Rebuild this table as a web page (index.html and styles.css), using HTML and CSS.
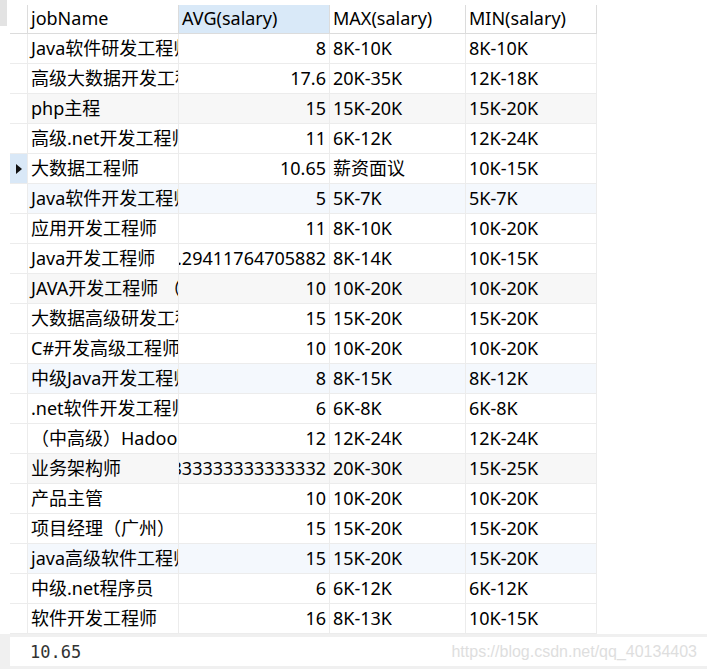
FILE: index.html
```html
<!DOCTYPE html>
<html>
<head>
<meta charset="utf-8">
<link rel="stylesheet" href="styles.css">
</head>
<body>
<div class="page">
  <div class="main">
    <div class="gutter"><div class="thumb"></div></div>
    <div class="grid">
      <div class="row head">
        <div class="ind"></div>
        <div class="c">jobName</div>
        <div class="c sel-head">AVG(salary)</div>
        <div class="c">MAX(salary)</div>
        <div class="c">MIN(salary)</div>
      </div>
      <div class="row"><div class="ind"></div><div class="c">Java软件研发工程师</div><div class="c n"><span>8</span></div><div class="c">8K-10K</div><div class="c">8K-10K</div></div>
      <div class="row"><div class="ind"></div><div class="c">高级大数据开发工程师</div><div class="c n"><span>17.6</span></div><div class="c">20K-35K</div><div class="c">12K-18K</div></div>
      <div class="row gray"><div class="ind"></div><div class="c">php主程</div><div class="c n"><span>15</span></div><div class="c">15K-20K</div><div class="c">15K-20K</div></div>
      <div class="row"><div class="ind"></div><div class="c">高级.net开发工程师</div><div class="c n"><span>11</span></div><div class="c">6K-12K</div><div class="c">12K-24K</div></div>
      <div class="row current"><div class="ind"><span class="arrow"></span></div><div class="c">大数据工程师</div><div class="c n"><span>10.65</span></div><div class="c">薪资面议</div><div class="c">10K-15K</div></div>
      <div class="row blue"><div class="ind"></div><div class="c">Java软件开发工程师</div><div class="c n"><span>5</span></div><div class="c">5K-7K</div><div class="c">5K-7K</div></div>
      <div class="row"><div class="ind"></div><div class="c">应用开发工程师</div><div class="c n"><span>11</span></div><div class="c">8K-10K</div><div class="c">10K-20K</div></div>
      <div class="row"><div class="ind"></div><div class="c">Java开发工程师</div><div class="c n"><span>11.29411764705882</span></div><div class="c">8K-14K</div><div class="c">10K-15K</div></div>
      <div class="row gray"><div class="ind"></div><div class="c">JAVA开发工程师 （广州）</div><div class="c n"><span>10</span></div><div class="c">10K-20K</div><div class="c">10K-20K</div></div>
      <div class="row"><div class="ind"></div><div class="c">大数据高级研发工程师</div><div class="c n"><span>15</span></div><div class="c">15K-20K</div><div class="c">15K-20K</div></div>
      <div class="row"><div class="ind"></div><div class="c">C#开发高级工程师</div><div class="c n"><span>10</span></div><div class="c">10K-20K</div><div class="c">10K-20K</div></div>
      <div class="row blue"><div class="ind"></div><div class="c">中级Java开发工程师</div><div class="c n"><span>8</span></div><div class="c">8K-15K</div><div class="c">8K-12K</div></div>
      <div class="row"><div class="ind"></div><div class="c">.net软件开发工程师</div><div class="c n"><span>6</span></div><div class="c">6K-8K</div><div class="c">6K-8K</div></div>
      <div class="row"><div class="ind"></div><div class="c">（中高级）Hadoop开发工程师</div><div class="c n"><span>12</span></div><div class="c">12K-24K</div><div class="c">12K-24K</div></div>
      <div class="row gray"><div class="ind"></div><div class="c">业务架构师</div><div class="c n"><span>20.833333333333332</span></div><div class="c">20K-30K</div><div class="c">15K-25K</div></div>
      <div class="row"><div class="ind"></div><div class="c">产品主管</div><div class="c n"><span>10</span></div><div class="c">10K-20K</div><div class="c">10K-20K</div></div>
      <div class="row"><div class="ind"></div><div class="c">项目经理（广州）</div><div class="c n"><span>15</span></div><div class="c">15K-20K</div><div class="c">15K-20K</div></div>
      <div class="row blue"><div class="ind"></div><div class="c">java高级软件工程师</div><div class="c n"><span>15</span></div><div class="c">15K-20K</div><div class="c">15K-20K</div></div>
      <div class="row"><div class="ind"></div><div class="c">中级.net程序员</div><div class="c n"><span>6</span></div><div class="c">6K-12K</div><div class="c">6K-12K</div></div>
      <div class="row"><div class="ind"></div><div class="c">软件开发工程师</div><div class="c n"><span>16</span></div><div class="c">8K-13K</div><div class="c">10K-15K</div></div>
    </div>
  </div>
  <div class="panel">
    <div class="value">10.65</div>
    <div class="mark">https://blog.csdn.net/qq_40134403</div>
  </div>
</div>
</body>
</html>
```

FILE: styles.css
```css
html, body {
  margin: 0;
  padding: 0;
  background: #ffffff;
}
.page {
  width: 707px;
  height: 669px;
  display: flex;
  flex-direction: column;
  background: #f0f0f0;
  overflow: hidden;
  font-family: "Noto Sans", "Noto Sans CJK SC", sans-serif;
  font-size: 18px;
  color: #000000;
}
.main {
  display: flex;
  background: #ffffff;
  height: 634px;
}
.gutter {
  width: 10px;
  flex: none;
}
.thumb {
  width: 7px;
  height: 26px;
  background: #e3e3e3;
}
.grid {
  margin-top: 5px;
  display: flex;
  flex-direction: column;
}
.row {
  display: grid;
  grid-template-columns: 18px 151px 151px 136px 131px;
  height: 30px;
}
.row > div {
  box-sizing: border-box;
  border-right: 1px solid #ececec;
  border-bottom: 1px solid #ececec;
  overflow: hidden;
  white-space: nowrap;
}
.row.head {
  height: 29px;
}
.row.head > div {
  border-right-color: #dcdcdc;
  border-bottom-color: #dcdcdc;
}
.c {
  padding: 0 3px;
  line-height: 28px;
}
.head .c {
  line-height: 27px;
}
.c.n {
  display: flex;
  justify-content: flex-end;
}
.c.n span {
  flex: none;
}
.sel-head {
  background: #d9e9f8;
}
.row.gray .c {
  background: #f7f7f7;
}
.row.blue .c {
  background: #f4f8fd;
}
.row.current .ind {
  background: #d9e8f7;
  display: flex;
  align-items: center;
  justify-content: center;
}
.arrow {
  width: 0;
  height: 0;
  border-left: 6px solid #111111;
  border-top: 5px solid transparent;
  border-bottom: 5px solid transparent;
  margin-left: 1px;
}
.panel {
  margin: 3px 0 3px 10px;
  height: 29px;
  background: #ffffff;
  display: flex;
  align-items: center;
  justify-content: space-between;
  padding: 0 10px 0 20px;
}
.value {
  font-family: "DejaVu Sans Mono", monospace;
  font-size: 17px;
  color: #333333;
}
.mark {
  font-family: "Liberation Sans", Arial, sans-serif;
  font-size: 16px;
  color: #dedede;
}
```
